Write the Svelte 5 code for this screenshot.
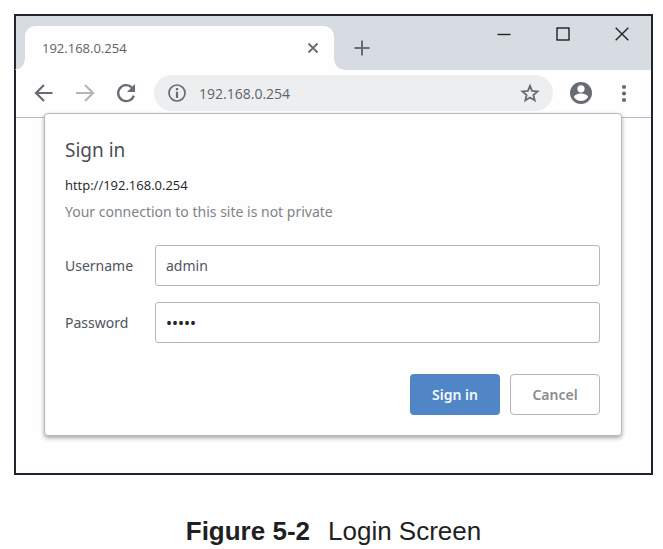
<script>
  let address = "192.168.0.254";
  let username = "admin";
  let password = "admin";
  let secure = false;

  function cancel() {
    username = "";
    password = "";
  }
</script>

<figure>
  <div class="window">
    <header class="strip">
      <div class="tab">
        <span>{address}</span>
        <button class="icon" aria-label="Close tab">
          <svg width="12" height="12" viewBox="0 0 12 12">
            <path d="M1.5 1.5l9 9M10.5 1.5l-9 9" stroke="#686c72" stroke-width="1.8" />
          </svg>
        </button>
      </div>
      <button class="icon new-tab" aria-label="New tab">
        <svg width="16" height="16" viewBox="0 0 16 16">
          <path d="M8 .5v15M.5 8h15" stroke="#686c73" stroke-width="2" />
        </svg>
      </button>
      <div class="controls">
        <button class="icon" aria-label="Minimize">
          <svg width="14" height="14" viewBox="0 0 14 14">
            <path d="M.5 7.5h13" stroke="#222" stroke-width="1.4" />
          </svg>
        </button>
        <button class="icon" aria-label="Maximize">
          <svg width="14" height="14" viewBox="0 0 14 14">
            <rect x="1" y="1" width="12" height="12" fill="none" stroke="#111" stroke-width="1.3" />
          </svg>
        </button>
        <button class="icon" aria-label="Close">
          <svg width="14" height="14" viewBox="0 0 14 14">
            <path d="M.7.7l12.6 12.6M13.3.7L.7 13.3" stroke="#222" stroke-width="1.4" />
          </svg>
        </button>
      </div>
    </header>

    <nav class="toolbar">
      <button class="icon" aria-label="Back">
        <svg width="20" height="20" viewBox="0 0 20 20">
          <path d="M18.5 10H2.5M10 2L2 10l8 8" fill="none" stroke="#676b73" stroke-width="2.2" />
        </svg>
      </button>
      <button class="icon" aria-label="Forward" disabled>
        <svg width="20" height="20" viewBox="0 0 20 20">
          <path d="M1 10h16.5M10 2l8 8-8 8" fill="none" stroke="#b4b6b9" stroke-width="2.2" />
        </svg>
      </button>
      <button class="icon" aria-label="Reload">
        <svg width="20" height="20" viewBox="0 0 20 20">
          <path d="M17.8 12.6A8 8 0 1 1 15.8 4.4" fill="none" stroke="#676b73" stroke-width="2.4" />
          <path d="M19 1v8h-8z" fill="#676b73" />
        </svg>
      </button>
      <div class="omnibox">
        <svg width="20" height="20" viewBox="0 0 20 20">
          <circle cx="10" cy="10" r="8" fill="none" stroke="#676b73" stroke-width="1.7" />
          <path d="M10 5v2.2M10 8.8V15" stroke="#676b73" stroke-width="2.2" />
        </svg>
        <input aria-label="Address" type="text" bind:value={address} />
        <button class="icon" aria-label="Bookmark this page">
          <svg width="20" height="20" viewBox="0 0 20 20">
            <path
              d="M10 2.8l2.1 5.1 5.5.5-4.2 3.6 1.3 5.4L10 14.5l-4.7 2.9 1.3-5.4-4.2-3.6 5.5-.5z"
              fill="none"
              stroke="#676b73"
              stroke-width="1.8"
            />
          </svg>
        </button>
      </div>
      <button class="icon profile" aria-label="Profile">
        <svg width="24" height="24" viewBox="0 0 24 24">
          <circle cx="12" cy="12" r="11" fill="#676b73" />
          <circle cx="12" cy="7.8" r="3.6" fill="#fff" />
          <path d="M5 16.2c0-2.4 4.4-3.6 7-3.6s7 1.2 7 3.6a8.4 8.4 0 0 1-14 0z" fill="#fff" />
        </svg>
      </button>
      <button class="icon menu" aria-label="Menu">
        <svg width="20" height="20" viewBox="0 0 20 20" fill="#676b73">
          <circle cx="10" cy="4" r="2.1" />
          <circle cx="10" cy="10.5" r="2.1" />
          <circle cx="10" cy="17" r="2.1" />
        </svg>
      </button>
    </nav>

    <main>
      <form class="dialog" on:submit|preventDefault>
        <h1>Sign in</h1>
        <p class="origin">http://{address}</p>
        {#if !secure}
          <p class="warning">Your connection to this site is not private</p>
        {/if}
        <div class="fields">
          <label for="username">Username</label>
          <input id="username" type="text" bind:value={username} />
          <label for="password">Password</label>
          <input id="password" type="password" bind:value={password} />
        </div>
        <div class="actions">
          <button class="primary" type="submit">Sign in</button>
          <button class="secondary" type="button" on:click={cancel}>Cancel</button>
        </div>
      </form>
    </main>
  </div>
  <figcaption><strong>Figure 5-2</strong>Login Screen</figcaption>
</figure>

<style>
  :global(body) {
    background: #fff;
  }

  figure {
    margin: 0;
    padding: 14px 10px 0 14px;
    font-family: "Noto Sans", "Open Sans", sans-serif;
    font-size: 14px;
  }

  .window {
    border: 2px solid #20242e;
    background: #fefefe;
  }

  button,
  input {
    box-sizing: border-box;
    font: inherit;
    margin: 0;
  }

  .icon {
    display: flex;
    flex: none;
    align-items: center;
    justify-content: center;
    padding: 0;
    border: none;
    background: none;
  }

  svg {
    display: block;
    flex: none;
  }

  .strip {
    display: flex;
    align-items: flex-start;
    padding: 10px 0 0 9px;
    background: #d7dbe2;
  }

  .tab {
    position: relative;
    display: flex;
    flex: 0 1 309px;
    box-sizing: border-box;
    align-items: center;
    justify-content: space-between;
    height: 44px;
    padding: 0 15px 0 17px;
    border-radius: 10px 10px 0 0;
    background: #fefefe;
    color: #5f6368;
    font-family: "Open Sans", sans-serif;
    font-size: 13px;
  }

  /* curved feet joining the tab to the toolbar */
  .tab::before,
  .tab::after {
    content: "";
    position: absolute;
    bottom: 0;
    width: 10px;
    height: 10px;
  }
  .tab::before {
    right: 100%;
    background: radial-gradient(circle at 0 0, transparent 9px, #fefefe 10px);
  }
  .tab::after {
    left: 100%;
    background: radial-gradient(circle at 100% 0, transparent 9px, #fefefe 10px);
  }

  .new-tab {
    height: 44px;
    margin-left: 20px;
  }

  .controls {
    display: flex;
    margin-left: auto;
  }
  .controls .icon {
    width: 59px;
    height: 16px;
  }

  .toolbar {
    display: flex;
    align-items: center;
    gap: 21px;
    padding: 5px 17px 6px 18px;
    border-bottom: 1px solid #b9bbbd;
  }

  .omnibox {
    display: flex;
    flex: 1;
    align-items: center;
    gap: 12px;
    min-width: 0;
    height: 36px;
    box-sizing: border-box;
    margin-left: -3px;
    padding: 0 13px;
    border-radius: 18px;
    background: #edeef0;
  }
  .omnibox input {
    flex: 1;
    min-width: 0;
    padding: 0;
    border: none;
    background: none;
    color: #5f6368;
    font-family: "Open Sans", sans-serif;
  }

  .profile {
    margin-left: -5px;
  }

  main {
    padding: 0 29px 37px 28px;
  }

  /* hangs over the lower edge of the toolbar */
  .dialog {
    position: relative;
    margin-top: -5px;
    padding: 24px 21px 20px 20px;
    border: 1px solid #b8baba;
    border-radius: 4px;
    background: #fefefe;
    box-shadow: 0 2px 4px rgba(0, 0, 0, 0.35);
  }

  h1,
  p {
    margin: 0;
  }
  h1 {
    color: #4a4d55;
    font-size: 19px;
    font-weight: 400;
    line-height: 24px;
  }
  .origin {
    margin-top: 10px;
    color: #222428;
    font-family: "Open Sans", sans-serif;
    font-size: 13px;
    line-height: 26px;
  }
  .warning {
    color: #808389;
    line-height: 27px;
  }

  .fields {
    display: grid;
    grid-template-columns: 80px 1fr;
    gap: 16px 10px;
    align-items: center;
    margin-top: 20px;
    color: #50545c;
  }
  .fields input {
    width: 100%;
    height: 41px;
    padding: 0 10px;
    border: 1px solid #b4b6b7;
    border-radius: 3px;
    background: #fefefe;
    color: #50545c;
  }
  .fields input[type="password"] {
    color: #24262b;
    font-size: 16px;
  }

  .actions {
    display: flex;
    justify-content: flex-end;
    gap: 10px;
    margin-top: 31px;
  }
  .actions button {
    width: 90px;
    height: 41px;
    padding: 0;
    border-radius: 4px;
    font-weight: 600;
  }
  .actions .primary {
    border: none;
    background: #5186c6;
    color: #f4f8fc;
  }
  .actions .secondary {
    border: 1px solid #b4b6b7;
    background: #fefefe;
    color: #8a8c91;
  }

  figcaption {
    display: flex;
    justify-content: center;
    gap: 18px;
    padding-top: 40px;
    color: #231f20;
    font-family: "Liberation Sans", Arial, sans-serif;
    font-size: 26px;
    line-height: 32px;
  }
</style>
